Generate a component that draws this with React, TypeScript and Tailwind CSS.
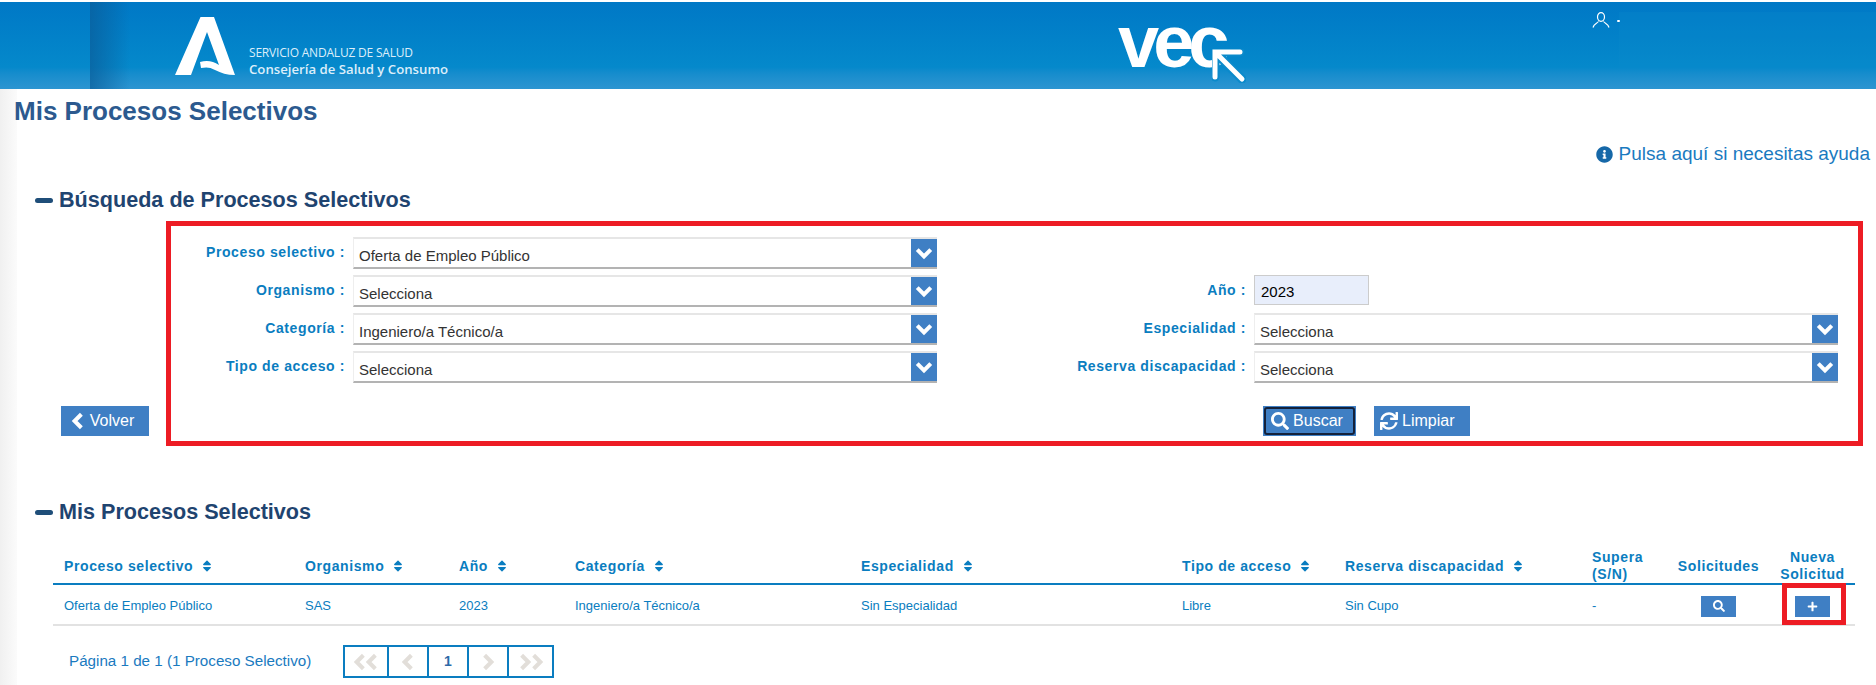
import { FaInfoCircle, FaPlus, FaSearch, FaSort, FaSync } from "react-icons/fa"

const columns = ["Proceso selectivo", "Organismo", "Año", "Categoría", "Especialidad", "Tipo de acceso", "Reserva discapacidad"]

const row = ["Oferta de Empleo Público", "SAS", "2023", "Ingeniero/a Técnico/a", "Sin Especialidad", "Libre", "Sin Cupo", "-"]

// heavy chevron like the glyphicon set, points left/right/down through the path
function Chevron({ d, className }: { d: string; className: string }) {
  return (
    <svg viewBox="0 0 16 16" className={className} fill="none" stroke="currentColor" strokeWidth="3.6">
      <path d={d} />
    </svg>
  )
}

const chevronDown = "M2 5L8 11L14 5"
const chevronLeft = "M11 2L5 8L11 14"
const chevronRight = "M5 2L11 8L5 14"

function SelectBox({ value }: { value: string }) {
  return (
    <div className="flex h-[32px] w-[584px] border-y-2 border-t-[#e6e6e6] border-b-[#b3b3b3] border-l border-l-[#eeeeee] bg-white">
      <span className="flex-1 pl-[5px] pt-[4px] text-[15px] leading-[26px] text-[#333]">{value}</span>
      <span className="flex w-[26px] items-center justify-center bg-[#3f7fc4] text-white">
        <Chevron d={chevronDown} className="h-[18px] w-[18px]" />
      </span>
    </div>
  )
}

function FieldLabel({ text, className }: { text: string; className: string }) {
  return <label className={`pt-[4px] text-right text-[14px] leading-[22px] font-bold tracking-[0.6px] text-[#0a7dc0] ${className}`}>{text} :</label>
}

function SectionTitle({ text, className }: { text: string; className: string }) {
  return (
    <h2 className={`flex items-center gap-[6px] pl-[35px] text-[21.6px] leading-[24px] font-bold text-[#1f4470] ${className}`}>
      <span className="h-[5px] w-[18px] rounded-full bg-[#1f4e79]" />
      {text}
    </h2>
  )
}

function PageCell({ className, children }: { className: string; children: React.ReactNode }) {
  return <div className={`flex items-center justify-center border-r-2 border-[#0a7dc0] last:border-r-0 ${className}`}>{children}</div>
}

export default function App() {
  return (
    <div className="relative min-h-[685px] bg-white font-['Liberation_Sans',Arial,sans-serif]">
      <div className="absolute top-[89px] bottom-0 left-0 w-[17px] bg-gradient-to-r from-[#f0f0f0] to-[#fbfbfb]" />

      <div className="h-[2px]" />
      <header className="relative flex h-[87px] bg-gradient-to-b from-[#0078c6] via-[#0589cb] via-75% to-[#2c95d1] pl-[175px] text-white">
        <div className="absolute top-0 bottom-0 left-[90px] w-[40px] bg-gradient-to-r from-[#0a5c98]/70 to-transparent" />
        <div className="absolute top-[10px] right-0 bottom-[20px] left-[1619px] bg-[#0a8ccc]/25" />
        <div className="relative flex w-[943px]">
          <svg viewBox="0 0 60 58" className="mt-[15px] h-[58px] w-[60px]" fill="#ffffff">
            <path d="M25.5 0H39L60 58C52 58 46 56 40 53C35 50 31 50 26 51L25 45C32 43 38 44 44 48L32 15L16 58H0Z" />
          </svg>
          <div className="mt-[42px] ml-[14px] font-['Open_Sans',sans-serif] text-[#dceefa]">
            <p className="text-[12px] leading-[17px] font-medium tracking-[-0.2px]">SERVICIO ANDALUZ DE SALUD</p>
            <p className="text-[13.2px] leading-[17px] font-semibold">Consejería de Salud y Consumo</p>
          </div>
        </div>
        <div className="relative w-[474px]">
          <span className="absolute top-[3px] left-0 text-[74px] leading-[74px] font-bold tracking-[-6px]">vec</span>
          <svg viewBox="0 0 34 34" className="absolute top-[47px] left-[94px] h-[34px] w-[34px]" fill="none" strokeLinecap="round">
            <path d="M3 28V3H28M5 5L30 30" stroke="#0b8acb" strokeWidth="9" />
            <path d="M3 28V3H28M5 5L30 30" stroke="#ffffff" strokeWidth="5" />
          </svg>
        </div>
        <div className="relative flex items-start gap-[7px] pt-[10px]">
          <svg viewBox="0 0 18 16" className="h-[16px] w-[18px]" fill="none" stroke="#ffffff" strokeWidth="1.2">
            <ellipse cx="9" cy="5" rx="3.5" ry="4.3" />
            <path d="M1 15.5C2 11.5 5 11.5 6.5 9.5M17 15.5C16 11.5 13 11.5 11.5 9.5" />
          </svg>
          <span className="mt-[8px] h-[2px] w-[3px] rounded-full bg-white" />
        </div>
      </header>

      <main className="relative">
        <h1 className="pt-[7px] pl-[14px] text-[26px] leading-[30px] font-bold text-[#2c5a8f]">Mis Procesos Selectivos</h1>

        <a className="mt-[16px] flex items-center justify-end gap-[6px] pr-[6px] text-[19px] leading-[24px] text-[#1a7abf]">
          <FaInfoCircle size={17} className="text-[#1668a8]" />
          Pulsa aquí si necesitas ayuda
        </a>

        <SectionTitle text="Búsqueda de Procesos Selectivos" className="mt-[22px]" />

        <div className="mt-[9px] flex items-end gap-[17px] pl-[61px]">
          <button className="mb-[10px] flex h-[30px] w-[88px] items-center justify-center gap-[3px] bg-[#3f7fc4] pr-[7px] text-[16px] text-white">
            <Chevron d={chevronLeft} className="h-[18px] w-[18px]" />
            Volver
          </button>

          <form className="h-[225px] w-[1697px] border-[5px] border-[#ed1c24] pt-[11px]">
            <div className="grid grid-cols-[766px_1fr] gap-y-[6px]">
              <div className="flex">
                <FieldLabel text="Proceso selectivo" className="mr-[8px] w-[174px]" />
                <SelectBox value="Oferta de Empleo Público" />
              </div>
              <div />
              <div className="flex">
                <FieldLabel text="Organismo" className="mr-[8px] w-[174px]" />
                <SelectBox value="Selecciona" />
              </div>
              <div className="flex">
                <FieldLabel text="Año" className="mr-[8px] w-[309px]" />
                <div className="h-[30px] w-[115px] border border-[#cccccc] bg-[#e8eefb] pl-[6px] text-[15px] leading-[32px] text-black">2023</div>
              </div>
              <div className="flex">
                <FieldLabel text="Categoría" className="mr-[8px] w-[174px]" />
                <SelectBox value="Ingeniero/a Técnico/a" />
              </div>
              <div className="flex">
                <FieldLabel text="Especialidad" className="mr-[8px] w-[309px]" />
                <SelectBox value="Selecciona" />
              </div>
              <div className="flex">
                <FieldLabel text="Tipo de acceso" className="mr-[8px] w-[174px]" />
                <SelectBox value="Selecciona" />
              </div>
              <div className="flex">
                <FieldLabel text="Reserva discapacidad" className="mr-[8px] w-[309px]" />
                <SelectBox value="Selecciona" />
              </div>
            </div>

            <div className="mt-[23px] flex gap-[18px] pl-[1092px]">
              <button type="button" className="h-[30px] w-[93px] bg-[#3f7fc4] p-[1px] text-white">
                <span className="flex h-full items-center justify-center gap-[4px] rounded-[3px] border-2 border-[#14213a] pr-[5px] text-[16px]">
                  <FaSearch size={18} />
                  Buscar
                </span>
              </button>
              <button type="button" className="flex h-[30px] w-[96px] items-center gap-[4px] bg-[#3f7fc4] pl-[6px] text-[16px] text-white">
                <FaSync size={18} />
                Limpiar
              </button>
            </div>
          </form>
        </div>

        <SectionTitle text="Mis Procesos Selectivos" className="mt-[54px]" />

        <table className="mt-[25px] ml-[53px] w-[1802px] table-fixed border-collapse">
          <colgroup>
            <col className="w-[241px]" />
            <col className="w-[154px]" />
            <col className="w-[116px]" />
            <col className="w-[286px]" />
            <col className="w-[321px]" />
            <col className="w-[163px]" />
            <col className="w-[247px]" />
            <col className="w-[86px]" />
            <col className="w-[103px]" />
            <col className="w-[85px]" />
          </colgroup>
          <thead>
            <tr className="h-[34px] border-b-2 border-[#0a7dc0] text-[14px] leading-[17px] font-bold tracking-[0.6px] text-[#0a7dc0]">
              {columns.map((title) => (
                <th key={title} className="px-[11px] text-left font-bold">
                  <span className="inline-flex items-center gap-[7px]">
                    {title}
                    <FaSort size={14} />
                  </span>
                </th>
              ))}
              <th className="px-[11px] text-left font-bold">Supera (S/N)</th>
              <th className="text-center font-bold">Solicitudes</th>
              <th className="text-center font-bold">Nueva Solicitud</th>
            </tr>
          </thead>
          <tbody>
            <tr className="h-[41px] border-b-2 border-[#e2e2e2] text-[13px] text-[#0a7dc0]">
              {row.map((cell, i) => (
                <td key={i} className="px-[11px] pt-[3px]">{cell}</td>
              ))}
              <td className="pt-[3px]">
                <button className="mx-auto flex h-[21px] w-[35px] items-center justify-center bg-[#3f7fc4] text-white">
                  <FaSearch size={12} />
                </button>
              </td>
              <td className="relative pt-[3px]">
                <button className="mx-auto flex h-[21px] w-[35px] items-center justify-center bg-[#3f7fc4] text-white">
                  <FaPlus size={11} />
                </button>
                <span className="absolute top-[-2px] left-[12px] h-[42px] w-[64px] border-[5px] border-[#ed1c24]" />
              </td>
            </tr>
          </tbody>
        </table>

        <div className="mt-[19px] flex items-center pl-[69px]">
          <span className="w-[274px] text-[15.2px] text-[#1a7abf]">Página 1 de 1 (1 Proceso Selectivo)</span>
          <div className="flex h-[33px] w-[211px] border-2 border-[#0a7dc0] text-[#e2ded9]">
            <PageCell className="w-[44px]">
              <Chevron d={chevronLeft} className="-mr-[3px] h-[18px] w-[18px]" />
              <Chevron d={chevronLeft} className="-ml-[3px] h-[18px] w-[18px]" />
            </PageCell>
            <PageCell className="w-[40px]">
              <Chevron d={chevronLeft} className="h-[18px] w-[18px]" />
            </PageCell>
            <PageCell className="w-[40px]">
              <span className="text-[14px] font-bold text-[#2c6aa8]">1</span>
            </PageCell>
            <PageCell className="w-[40px]">
              <Chevron d={chevronRight} className="h-[18px] w-[18px]" />
            </PageCell>
            <PageCell className="flex-1">
              <Chevron d={chevronRight} className="-mr-[3px] h-[18px] w-[18px]" />
              <Chevron d={chevronRight} className="-ml-[3px] h-[18px] w-[18px]" />
            </PageCell>
          </div>
        </div>
      </main>
    </div>
  )
}
